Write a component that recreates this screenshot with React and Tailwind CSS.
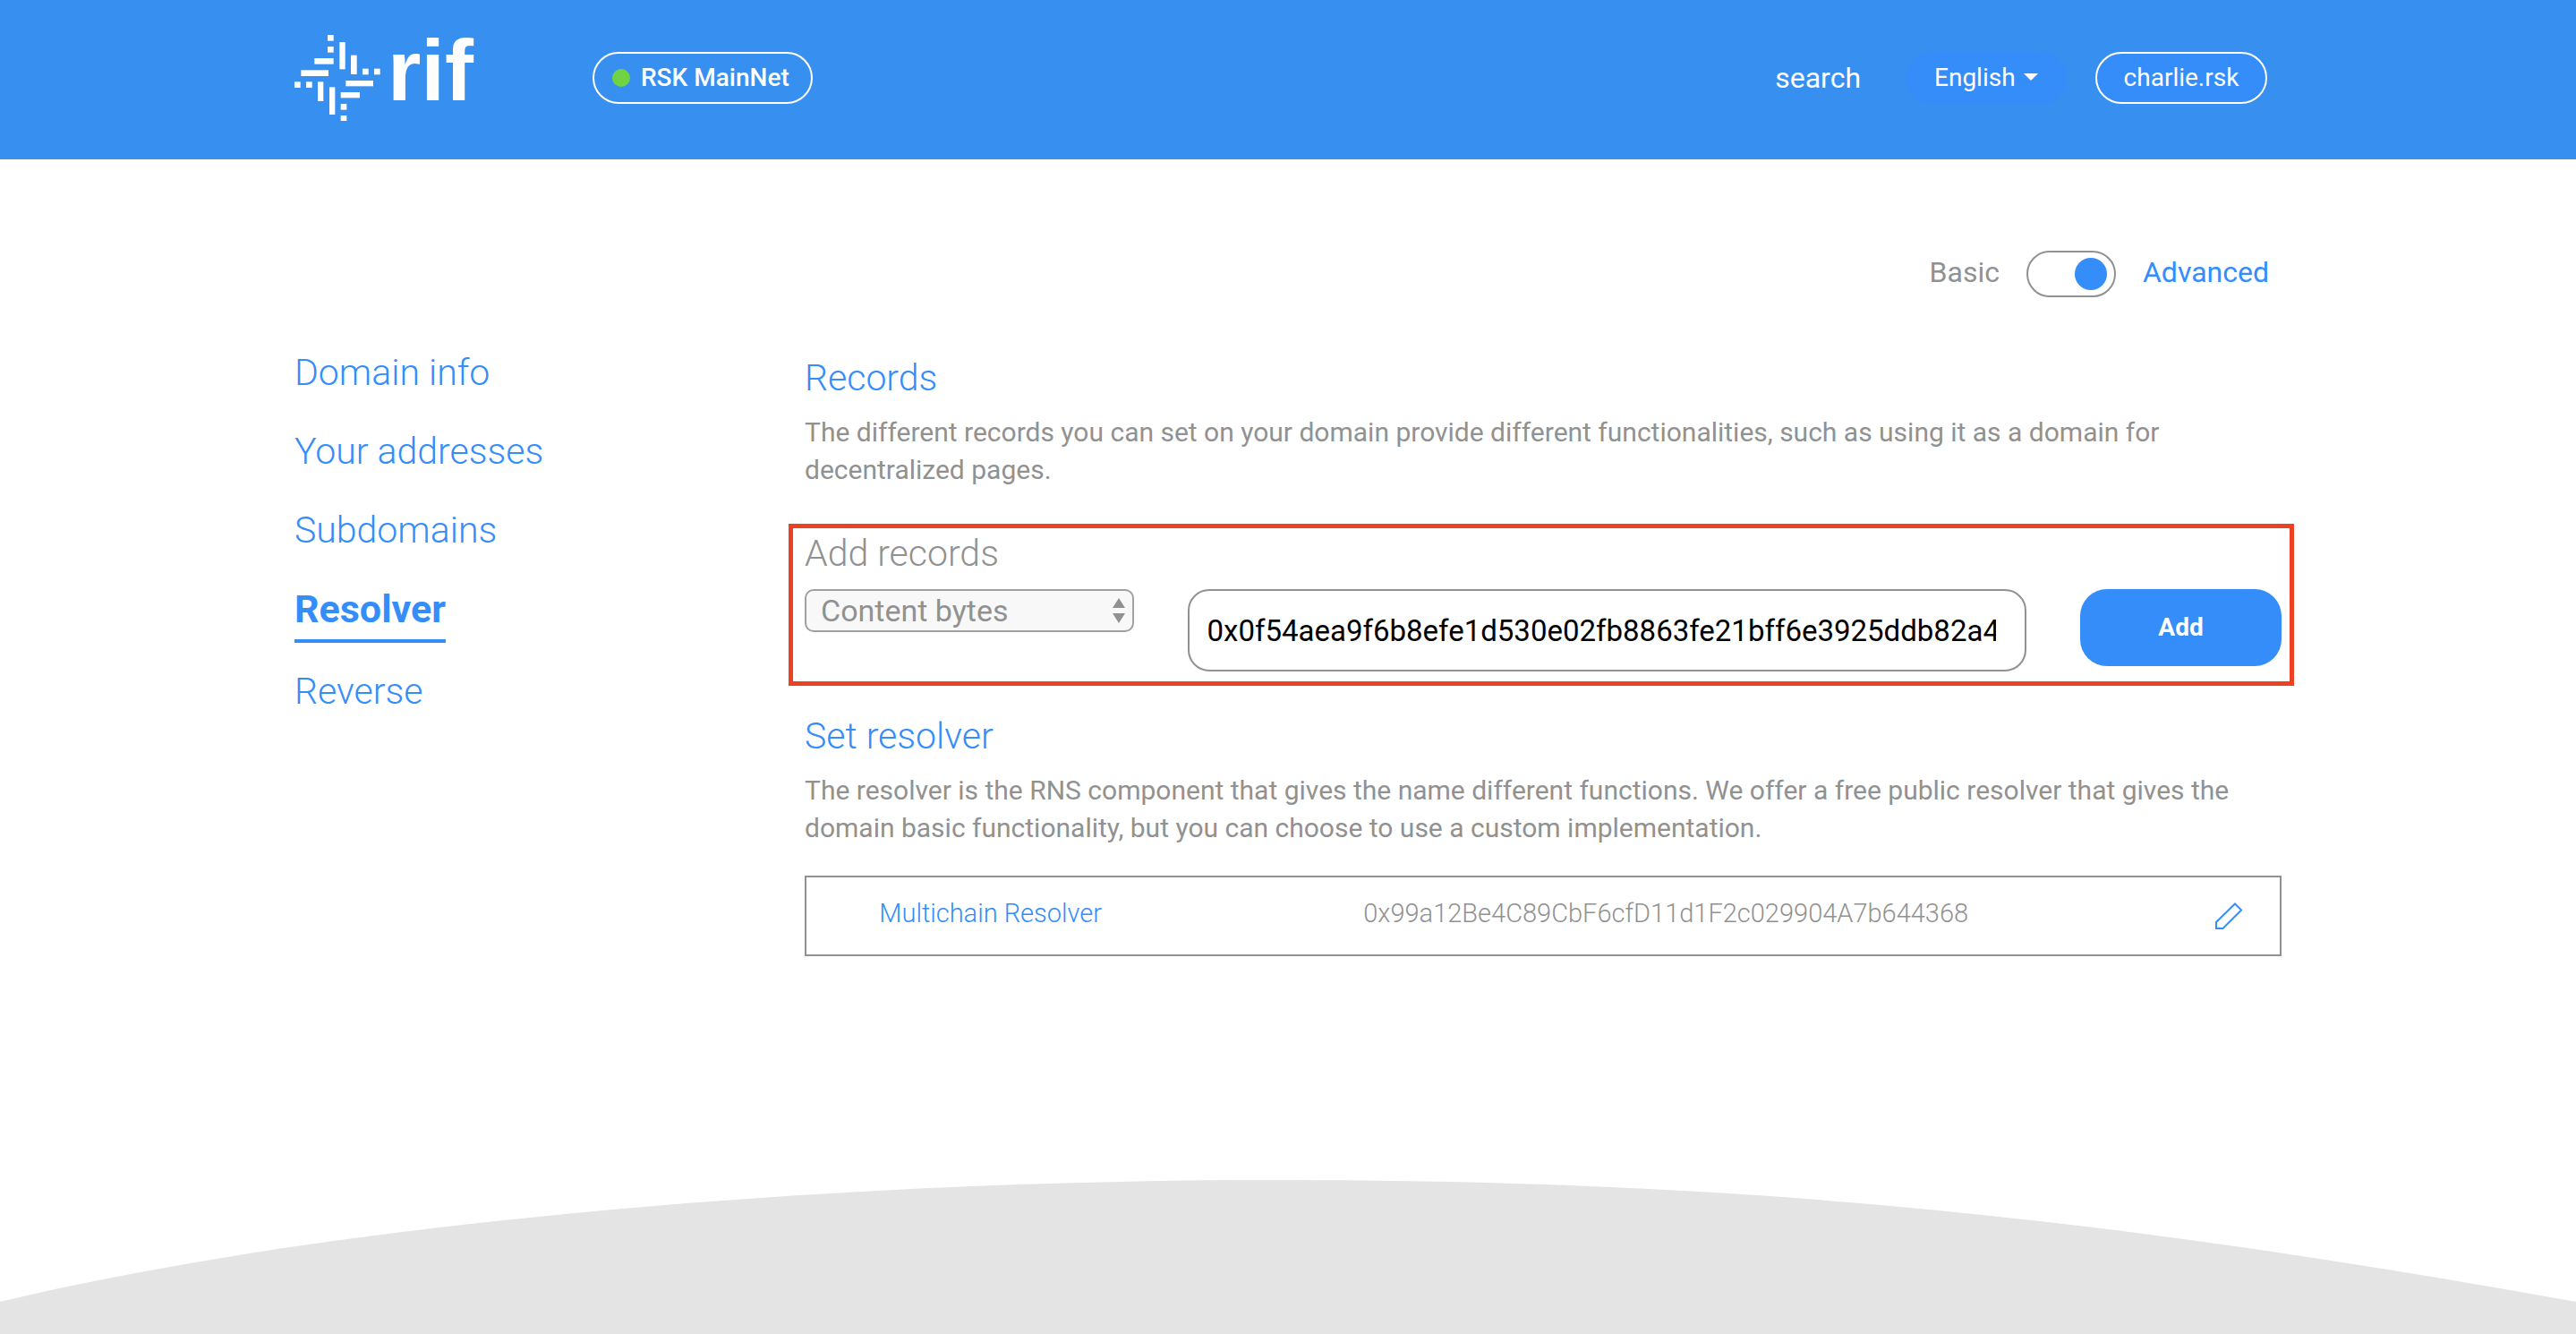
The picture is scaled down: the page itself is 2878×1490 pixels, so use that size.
import React, { useState } from "react";

const MARK_BLOCKS = [
  [171, 60, 20, 20], [171, 99, 20, 20], [127, 138, 64, 20], [82, 178, 92, 20],
  [211, 84, 19, 91], [249, 128, 20, 64], [288, 173, 20, 20], [327, 173, 20, 20],
  [60, 217, 20, 20], [99, 217, 20, 20], [138, 217, 19, 65], [177, 235, 19, 92],
  [232, 213, 92, 19], [215, 252, 64, 19], [215, 291, 20, 20], [215, 330, 20, 18],
];

const NAV_ITEMS = ["Domain info", "Your addresses", "Subdomains", "Resolver", "Reverse"];

function Logo() {
  return (
    <a href="#home" className="flex h-24 w-[200px] items-center gap-2 text-white">
      <svg viewBox="60 60 288 288" className="size-24 shrink-0" fill="currentColor" aria-hidden="true">
        {MARK_BLOCKS.map(([x, y, w, h]) => (
          <rect key={`${x}-${y}`} x={x} y={y} width={w} height={h} />
        ))}
      </svg>
      <span className="pb-4 font-['Liberation_Sans',sans-serif] text-[96px] leading-[78px] font-bold">rif</span>
    </a>
  );
}

function Header() {
  return (
    <header className="bg-[#378ff0] pt-[39px] pb-[43px] text-white">
      <div className="mx-auto flex max-w-[2220px] items-center">
        <Logo />
        <div className="ml-[133px] flex h-[58px] w-[246px] items-center gap-3 rounded-full border-2 border-white px-5 text-[28px] font-medium whitespace-nowrap">
          <span className="size-5 rounded-full bg-[#70d344]" />
          RSK MainNet
        </div>
        <nav className="mr-4 ml-auto flex items-center">
          <a href="#search" className="mr-[50px] text-[32px]">search</a>
          <div className="relative mr-8">
            <select aria-label="Language" className="h-[58px] w-[180px] appearance-none rounded-full bg-[#348df9] pl-8 text-[28px]">
              <option>English</option>
            </select>
            <svg viewBox="0 0 16 8" className="pointer-events-none absolute top-6 right-8 h-2 w-4" fill="currentColor" aria-hidden="true">
              <path d="M0 0h16L8 8z" />
            </svg>
          </div>
          <button className="h-[58px] w-48 rounded-full border-2 border-white bg-[#348df9] text-[28px]">charlie.rsk</button>
        </nav>
      </div>
    </header>
  );
}

function ModeSwitch() {
  const [advanced, setAdvanced] = useState(true);
  return (
    <div className="mr-[14px] flex items-center justify-end gap-[30px] text-[32px] leading-[48px]">
      <label htmlFor="mode" className="pb-1">Basic</label>
      <input
        id="mode"
        type="checkbox"
        role="switch"
        checked={advanced}
        onChange={(e) => setAdvanced(e.target.checked)}
        className="flex h-[52px] w-[100px] appearance-none items-center rounded-full border-2 border-[#919191] px-2 before:size-9 before:rounded-full before:bg-[#348df9] checked:justify-end"
      />
      <label htmlFor="mode" className="pb-1 text-[#348df9]">Advanced</label>
    </div>
  );
}

function Sidebar() {
  return (
    <nav className="col-span-3 flex flex-col items-start gap-7 text-[41px] leading-[60px] font-light text-[#348df9]">
      {NAV_ITEMS.map((item) => (
        <a
          key={item}
          href={`#${item}`}
          className={item === "Resolver" ? "-mb-1 border-b-4 border-[#348df9] pb-1 text-[43px] leading-[60px] font-bold" : ""}
        >
          {item}
        </a>
      ))}
    </nav>
  );
}

function AddRecords() {
  return (
    <form className="mt-[39px] -mr-[14px] -ml-[18px] border-[5px] border-[#ee4023] pt-1 pr-[9px] pb-[11px] pl-[13px]">
      <h3 className="text-[41px] leading-[48px] font-light">Add records</h3>
      <div className="mt-4 grid grid-cols-12 items-start gap-x-[60px]">
        <div className="relative col-span-3">
          <select aria-label="Record type" className="block h-12 w-full appearance-none rounded-[10px] border-2 border-[#a0a0a0] bg-[#f8f8f8] px-4 text-[34px] leading-[44px]">
            <option>Content bytes</option>
          </select>
          <svg viewBox="0 0 14 28" className="pointer-events-none absolute top-[10px] right-[10px] h-7 w-[14px]" fill="currentColor" aria-hidden="true">
            <path d="M7 0l7 11H0zM0 17h14L7 28z" />
          </svg>
        </div>
        <input
          aria-label="Record content"
          defaultValue="0x0f54aea9f6b8efe1d530e02fb8863fe21bff6e3925ddb82a4c1d7e9b05f3a6288"
          className="col-span-7 h-[92px] rounded-3xl border-2 border-[#919191] pr-8 pl-5 text-[33px] text-black"
        />
        <button type="button" className="col-span-2 h-[86px] rounded-[30px] bg-[#348df9] text-[28px] font-bold text-white">Add</button>
      </div>
    </form>
  );
}

function ResolverCard() {
  return (
    <div className="mt-8 grid h-[90px] grid-cols-12 items-center border-2 border-[#919191] text-center text-[29px] font-light">
      <span className="col-span-3 pb-1 text-[#348df9]">Multichain Resolver</span>
      <span className="col-span-8 pb-1">0x99a12Be4C89CbF6cfD11d1F2c029904A7b644368</span>
      <button aria-label="Edit resolver" className="ml-6 flex justify-center">
        <svg viewBox="0 0 30 30" className="size-[30px]" fill="none" stroke="#348df9" strokeWidth="2" aria-hidden="true">
          <path d="M22 1.500L29 8.500L8.500 29H1V22z" />
        </svg>
      </button>
    </div>
  );
}

export default function App() {
  return (
    <div className="flex min-h-screen flex-col bg-white font-[Roboto,sans-serif] text-[#919191]">
      <Header />
      <main className="mx-auto w-full max-w-[2220px] pt-[102px]">
        <ModeSwitch />
        <div className="mt-[54px] grid grid-cols-12 gap-x-[60px]">
          <Sidebar />
          <div className="col-span-9 pt-3">
            <h2 className="text-[41px] leading-[48px] font-light text-[#348df9]">Records</h2>
            <p className="mt-4 text-[30px] leading-[42px]">
              The different records you can set on your domain provide different functionalities, such as using it as a domain for decentralized pages.
            </p>
            <AddRecords />
            <h2 className="mt-8 text-[41px] leading-[48px] font-light text-[#348df9]">Set resolver</h2>
            <p className="mt-4 text-[30px] leading-[42px]">
              The resolver is the RNS component that gives the name different functions. We offer a free public resolver that gives the domain basic functionality, but you can choose to use a custom implementation.
            </p>
            <ResolverCard />
          </div>
        </div>
      </main>
      <footer className="mt-auto">
        <svg viewBox="0 0 2878 172" preserveAspectRatio="none" className="block h-[172px] w-full" fill="#e4e4e4" aria-hidden="true">
          <path d="M0 136C350 52 900 0 1420 0C1950 0 2350 41 2878 136V172H0Z" />
        </svg>
      </footer>
    </div>
  );
}
